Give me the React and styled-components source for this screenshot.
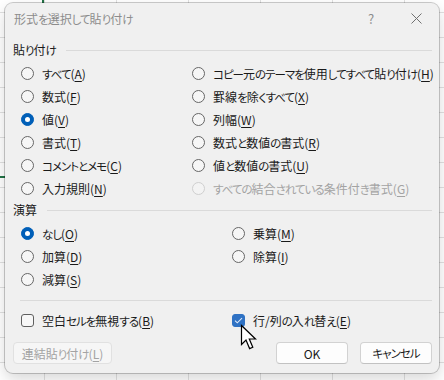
import React from "react";
import styled, { createGlobalStyle } from "styled-components";

const GlobalStyle = createGlobalStyle`
  html, body { margin: 0; padding: 0; background: #ffffff; }
  body {
    font-family: "Noto Sans CJK JP", "Noto Sans", sans-serif;
    font-size: 12px;
    color: #1a1a1a;
  }
  * { box-sizing: border-box; }
`;

const Page = styled.div`
  position: relative;
  width: 444px;
  height: 380px;
  overflow: hidden;
  padding: 3px 0 0 5px;
  background-color: #ffffff;
  background-image:
    linear-gradient(to right, #e1e1e1 1px, transparent 1px),
    linear-gradient(to bottom, #e1e1e1 1px, transparent 1px);
  background-size: 72px 25px;
  background-position: 44px 12px;
`;

const Selection = styled.span`
  position: absolute;
  left: -10px;
  top: -10px;
  width: 54px;
  height: 188px;
  border-right: 2px solid #217346;
  border-bottom: 2px solid #217346;
`;

const Dialog = styled.div`
  position: relative;
  width: 434px;
  height: 370px;
  background: #f0f0f0;
  border-radius: 8px;
  display: flex;
  flex-direction: column;
  box-shadow: 0 0 0 1px rgba(0, 0, 0, 0.2), 0 6px 16px rgba(0, 0, 0, 0.16);
  font-feature-settings: "palt";
`;

const Kana = styled.span`
  font-size: 11.5px;
  letter-spacing: -1px;
`;

const TitleBar = styled.div`
  display: flex;
  align-items: center;
  height: 30px;
`;

const Title = styled.div`
  flex: 1;
  padding-left: 9px;
  color: #8c8c8c;
  font-size: 12px;
`;

const TitleButton = styled.div`
  width: ${(p) => p.$w}px;
  height: 30px;
  display: flex;
  align-items: center;
  justify-content: center;
  color: #8c8c8c;
  font-size: 13px;
`;

const Body = styled.div`
  display: flex;
  flex-direction: column;
  padding: 0 7px 9px 8px;
`;

const SectionHeader = styled.div`
  display: flex;
  align-items: center;
  gap: 10px;
  height: 16px;
  margin-top: ${(p) => p.$mt}px;
  line-height: 16px;
  &::after {
    content: "";
    flex: 1;
    height: 1px;
    background: #dadada;
  }
`;

const OptionGrid = styled.div`
  display: grid;
  grid-template-columns: ${(p) => p.$cols};
  grid-auto-rows: 23px;
  padding-left: 8px;
  margin-top: ${(p) => p.$mt}px;
`;

const Option = styled.div`
  display: flex;
  align-items: center;
  gap: 8px;
  white-space: nowrap;
  color: ${(p) => (p.$disabled ? "#a3a3a3" : "#1a1a1a")};
`;

const Radio = styled.span`
  flex: none;
  width: 13px;
  height: 13px;
  border-radius: 50%;
  display: flex;
  align-items: center;
  justify-content: center;
  background: ${(p) => (p.$checked ? "#005fb8" : p.$disabled ? "#f3f3f3" : "#f6f6f6")};
  border: 1px solid ${(p) => (p.$checked ? "#005fb8" : p.$disabled ? "#cfcfcf" : "#666666")};
  &::after {
    content: "";
    display: ${(p) => (p.$checked ? "block" : "none")};
    width: 5px;
    height: 5px;
    border-radius: 50%;
    background: #ffffff;
  }
`;

const Check = styled.span`
  flex: none;
  width: 13px;
  height: 13px;
  border-radius: 3px;
  display: flex;
  align-items: center;
  justify-content: center;
  background: ${(p) => (p.$checked ? "#2f72c4" : "#f7f7f7")};
  border: 1px solid ${(p) => (p.$checked ? "#2f72c4" : "#5f5f5f")};
`;

const Key = styled.u`
  text-decoration: underline;
  text-underline-offset: 2px;
  text-decoration-thickness: 1px;
`;

const Separator = styled.div`
  height: 1px;
  margin: 9px 0 0 7px;
  background: #dadada;
`;

const ButtonRow = styled.div`
  display: flex;
  align-items: center;
  margin-top: 10px;
  gap: 12px;
`;

const Spacer = styled.div`
  flex: 1;
`;

const Button = styled.div`
  width: ${(p) => p.$w}px;
  height: 22px;
  display: flex;
  align-items: center;
  justify-content: center;
  border-radius: 4px;
  background: ${(p) => (p.$disabled ? "#f6f6f6" : "#fdfdfd")};
  border: 1px solid ${(p) => (p.$disabled ? "#e1e1e1" : "#d2d2d2")};
  border-bottom-color: ${(p) => (p.$disabled ? "#e1e1e1" : "#c2c2c2")};
  color: ${(p) => (p.$disabled ? "#a3a3a3" : "#1a1a1a")};
  white-space: nowrap;
`;

const Cursor = styled.svg`
  position: absolute;
  left: 240px;
  top: 324px;
`;

const JP = ({ children }) =>
  String(children)
    .split(/([\u3040-\u30ff]+)/)
    .filter(Boolean)
    .map((part, i) =>
      /^[\u3040-\u30ff]+$/.test(part) ? <Kana key={i}>{part}</Kana> : <React.Fragment key={i}>{part}</React.Fragment>
    );

const L = ({ text, k }) => (
  <span>
    <JP>{text}</JP>(<Key>{k}</Key>)
  </span>
);

const pasteLeft = [
  ["すべて", "A"],
  ["数式", "F"],
  ["値", "V", true],
  ["書式", "T"],
  ["コメントとメモ", "C"],
  ["入力規則", "N"],
];
const pasteRight = [
  ["コピー元のテーマを使用してすべて貼り付け", "H"],
  ["罫線を除くすべて", "X"],
  ["列幅", "W"],
  ["数式と数値の書式", "R"],
  ["値と数値の書式", "U"],
  ["すべての結合されている条件付き書式", "G", false, true],
];

export default function App() {
  const pasteRows = [];
  for (let i = 0; i < 6; i++) {
    const a = pasteLeft[i];
    const b = pasteRight[i];
    pasteRows.push(
      <Option key={"l" + i}>
        <Radio $checked={a[2]} />
        <L text={a[0]} k={a[1]} />
      </Option>,
      <Option key={"r" + i} $disabled={b[3]}>
        <Radio $checked={b[2]} $disabled={b[3]} />
        <L text={b[0]} k={b[1]} />
      </Option>
    );
  }

  return (
    <>
      <GlobalStyle />
      <Page>
        <Selection />
        <Dialog>
          <TitleBar>
            <Title>
              <JP>形式を選択して貼り付け</JP>
            </Title>
            <TitleButton $w={44}>?</TitleButton>
            <TitleButton $w={46}>
              <svg width="11" height="11" viewBox="0 0 11 11">
                <path d="M0.5 0.5 L10.5 10.5 M10.5 0.5 L0.5 10.5" stroke="#707070" strokeWidth="1" fill="none" />
              </svg>
            </TitleButton>
          </TitleBar>
          <Body>
            <SectionHeader $mt={9}>
              <span>
                <JP>貼り付け</JP>
              </span>
            </SectionHeader>
            <OptionGrid $cols="171px 1fr" $mt={4}>
              {pasteRows}
            </OptionGrid>
            <SectionHeader $mt={2}>
              <span>演算</span>
            </SectionHeader>
            <OptionGrid $cols="211px 1fr" $mt={4}>
              <Option>
                <Radio $checked />
                <L text="なし" k="O" />
              </Option>
              <Option>
                <Radio />
                <L text="乗算" k="M" />
              </Option>
              <Option>
                <Radio />
                <L text="加算" k="D" />
              </Option>
              <Option>
                <Radio />
                <L text="除算" k="I" />
              </Option>
              <Option>
                <Radio />
                <L text="減算" k="S" />
              </Option>
            </OptionGrid>
            <Separator />
            <OptionGrid $cols="211px 1fr" $mt={8}>
              <Option>
                <Check />
                <L text="空白セルを無視する" k="B" />
              </Option>
              <Option>
                <Check $checked>
                  <svg width="9" height="7" viewBox="0 0 9 7">
                    <path d="M1 3.6 L3.3 5.8 L8 1.2" stroke="#dce8f8" strokeWidth="1.1" fill="none" />
                  </svg>
                </Check>
                <L text="行/列の入れ替え" k="E" />
              </Option>
            </OptionGrid>
            <ButtonRow>
              <Button $w={99} $disabled>
                <L text="連結貼り付け" k="L" />
              </Button>
              <Spacer />
              <Button $w={72}>OK</Button>
              <Button $w={72}>
                <JP>キャンセル</JP>
              </Button>
            </ButtonRow>
          </Body>
        </Dialog>
        <Cursor width="18" height="28" viewBox="0 0 18 28">
          <path
            d="M1.5 1.5 L1.5 20.5 L6 16 L9.6 24.6 L12.8 23.2 L9.3 15 L15.5 15 Z"
            fill="#ffffff"
            stroke="#000000"
            strokeWidth="1.2"
            strokeLinejoin="miter"
          />
        </Cursor>
      </Page>
    </>
  );
}
